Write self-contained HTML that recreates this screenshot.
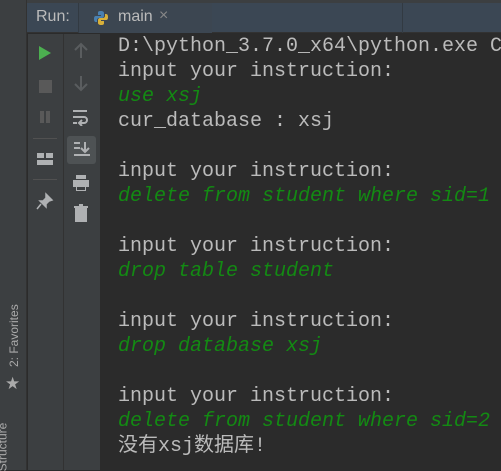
<!DOCTYPE html>
<html><head><meta charset="utf-8"><style>
*{margin:0;padding:0;box-sizing:border-box}
body{width:501px;height:470px;background:#2b2b2b;position:relative;overflow:hidden;font-family:"Liberation Sans",sans-serif}
.abs{position:absolute}
#left{left:0;top:0;width:27px;height:470px;background:#3c3f41;border-right:1px solid #323232}
#top{left:27px;top:0;width:474px;height:3px;background:#3c3f41}
#hdr{left:27px;top:3px;width:474px;height:30px;background:#3b4754;border-bottom:1px solid #323232}
#tb1{left:28px;top:34px;width:36px;height:436px;background:#3c3f41;border-right:1px solid #323232}
#tb2{left:64px;top:34px;width:36px;height:436px;background:#3c3f41}
#con{left:100px;top:34px;width:401px;height:436px;background:#2b2b2b}
.l{position:absolute;left:118px;font-family:"Liberation Mono","Noto Sans CJK SC",monospace;font-size:20px;line-height:25px;color:#bbbbbb;white-space:pre}
.g{color:#138a13;font-style:italic}
</style></head><body>
<div class="abs" id="left"></div>
<div class="abs" id="top"></div>
<div class="abs" id="hdr">
 <div class="abs" style="left:9px;top:5px;color:#bbbbbb;font-size:16px">Run:</div>
 <div class="abs" style="left:51px;top:0;width:134px;height:30px;background:#3c4651;border-left:1px solid #323a42"></div>
 <svg class="abs" style="left:66px;top:7px" width="16" height="16" viewBox="0 0 16 16"><path d="M8 1c-3 0-3 1-3 2v2h3v1H3c-1.5 0-2 1-2 3s.6 3 2 3h1v-2c0-1 1-2 2-2h3c1 0 2-1 2-2V3c0-1-1-2-3-2z" fill="#4a80b0"/><path d="M8 15c3 0 3-1 3-2v-2H8v-1h5c1.5 0 2-1 2-3s-.6-3-2-3h-1v2c0 1-1 2-2 2H7c-1 0-2 1-2 2v3c0 1 1 2 3 2z" fill="#d8b03a"/></svg>
 <div class="abs" style="left:91px;top:5px;color:#bbbbbb;font-size:16px">main</div>
 <div class="abs" style="left:132px;top:4px;color:#888;font-size:16px">×</div>
 <div class="abs" style="left:375px;top:0;width:1px;height:30px;background:#323a42"></div>
</div>
<div class="abs" id="tb1">
 <svg class="abs" style="left:10px;top:11px" width="14" height="16"><path d="M1 1L13 8L1 15Z" fill="#4caf50"/></svg>
 <div class="abs" style="left:11px;top:46px;width:13px;height:13px;background:#595959"></div>
 <div class="abs" style="left:12px;top:77px;width:4px;height:12px;background:#595959"></div>
 <div class="abs" style="left:18px;top:77px;width:4px;height:12px;background:#595959"></div>
 <div class="abs" style="left:5px;top:104px;width:24px;height:1px;background:#515151"></div>
 <div class="abs" style="left:9px;top:119px;width:7px;height:5px;background:#afb1b3"></div>
 <div class="abs" style="left:18px;top:119px;width:7px;height:5px;background:#afb1b3"></div>
 <div class="abs" style="left:9px;top:126px;width:16px;height:5px;background:#afb1b3"></div>
 <div class="abs" style="left:5px;top:145px;width:24px;height:1px;background:#515151"></div>
 <svg class="abs" style="left:8px;top:158px" width="18" height="18"><path d="M10 2l6 6-3 1-3 3 0 3-6-6 3 0 3-3z M5 12L1 17" fill="#afb1b3" stroke="#afb1b3" stroke-width="1.5"/></svg>
</div>
<div class="abs" id="tb2">
 <svg class="abs" style="left:8px;top:8px" width="18" height="20"><path d="M9 2v14M3 8l6-6 6 6" stroke="#5a5d5f" stroke-width="2" fill="none"/></svg>
 <svg class="abs" style="left:8px;top:40px" width="18" height="20"><path d="M9 2v14M3 10l6 6 6-6" stroke="#5a5d5f" stroke-width="2" fill="none"/></svg>
 <svg class="abs" style="left:8px;top:74px" width="18" height="18"><path d="M1 3h14M1 9h11a3 3 0 0 1 0 6H8M1 15h4M10 12l-3 3 3 3" stroke="#afb1b3" stroke-width="2" fill="none"/></svg>
 <div class="abs" style="left:3px;top:102px;width:29px;height:28px;background:#4e5254;border-radius:3px"></div>
 <svg class="abs" style="left:8px;top:106px" width="20" height="20"><path d="M2 3h6M2 8h6M2 15h16M13 2v10M9 8l4 4 4-4" stroke="#afb1b3" stroke-width="2" fill="none"/></svg>
 <svg class="abs" style="left:8px;top:140px" width="18" height="18"><path d="M4 1h10v4H4zM1 6h16v7H1zM4 11h10v6H4z" fill="#afb1b3"/><path d="M5 13h8v3H5z" fill="#3c3f41"/></svg>
 <svg class="abs" style="left:9px;top:170px" width="16" height="18"><path d="M1 3h14M6 1h4M3 5h10v12H3z" stroke="#afb1b3" stroke-width="2" fill="#afb1b3"/></svg>
</div>
<div class="abs" id="con"></div>
<div class="abs" style="left:4px;top:303px;width:20px;height:70px">
 <div style="position:absolute;left:-22px;top:25px;width:64px;transform:rotate(-90deg);color:#aaa;font-size:12px;white-space:nowrap">2: Favorites</div>
</div>
<div class="abs" style="left:5px;top:374px;color:#aaa;font-size:17px">★</div>
<div class="abs" style="left:-22px;top:440px;transform:rotate(-90deg);color:#aaa;font-size:12px;white-space:nowrap">Structure</div>
<div class="l" style="top:34px">D:\python_3.7.0_x64\python.exe C</div>
<div class="l" style="top:59px">input your instruction:</div>
<div class="l g" style="top:84px">use xsj</div>
<div class="l" style="top:109px">cur_database : xsj</div>
<div class="l" style="top:159px">input your instruction:</div>
<div class="l g" style="top:184px">delete from student where sid=1</div>
<div class="l" style="top:234px">input your instruction:</div>
<div class="l g" style="top:259px">drop table student</div>
<div class="l" style="top:309px">input your instruction:</div>
<div class="l g" style="top:334px">drop database xsj</div>
<div class="l" style="top:384px">input your instruction:</div>
<div class="l g" style="top:409px">delete from student where sid=2</div>
<div class="l" style="top:434px">没有xsj数据库!</div>
</body></html>
